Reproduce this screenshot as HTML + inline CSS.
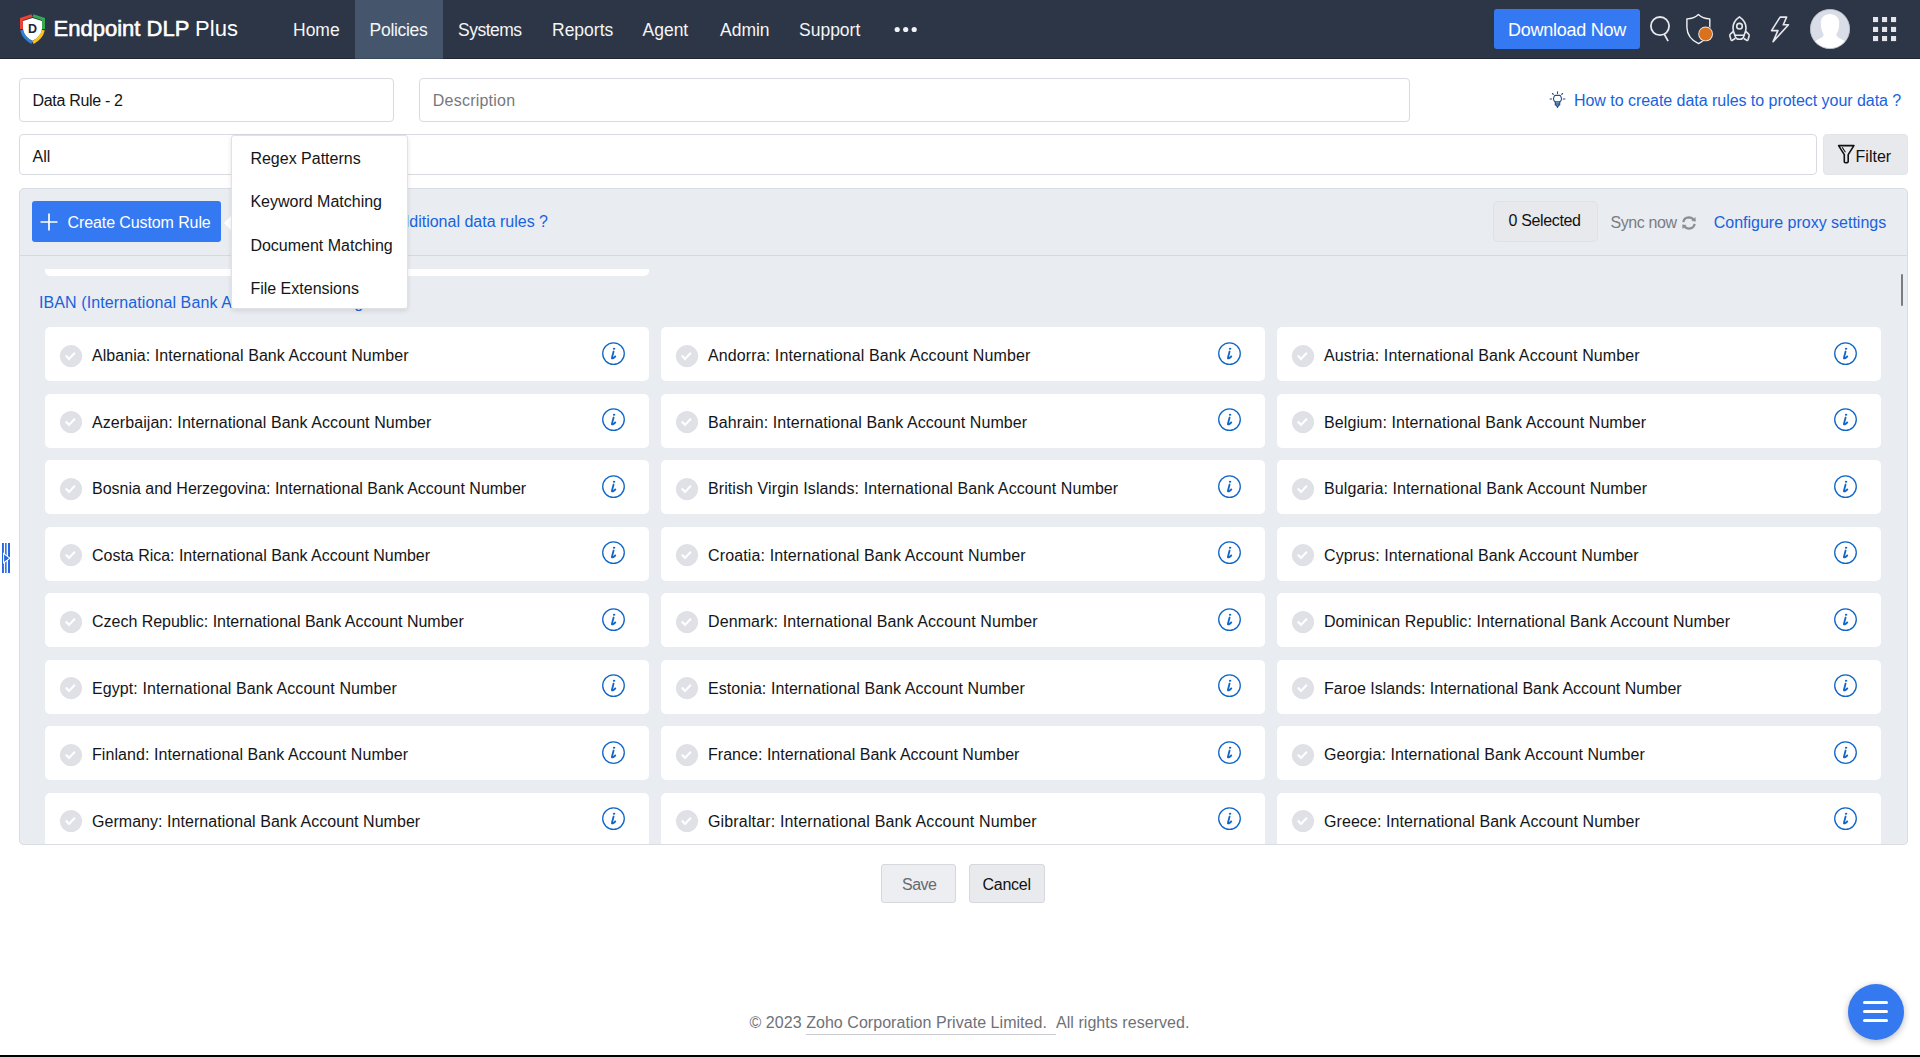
<!DOCTYPE html>
<html><head><meta charset="utf-8"><title>Endpoint DLP Plus</title>
<style>
*{box-sizing:border-box;margin:0;padding:0}
html,body{width:1920px;height:1057px;overflow:hidden;background:#fff}
body{position:relative;font-family:"Liberation Sans",sans-serif;color:#141518;font-size:16px;line-height:16px}
.a{position:absolute;white-space:nowrap}
#hdr{position:absolute;left:0;top:0;width:1920px;height:59px;background:#2d3646;border-bottom:1px solid #1f2734}
#act{position:absolute;left:355px;top:0;width:88px;height:58px;background:#45566c;border-bottom:1px solid #3a485c;height:59px}
.nav{position:absolute;top:21.6px;font-size:17.5px;line-height:17.5px;color:#f4f5f7}
#logo{position:absolute;left:53.6px;top:17.5px;font-size:22px;line-height:22px;color:#fff;letter-spacing:0px}
#logo b{font-weight:normal;-webkit-text-stroke:0.6px #fff}
#dl{position:absolute;left:1494px;top:9px;width:146px;height:40px;background:#3579f2;border-radius:3px;color:#fff;font-size:18px;line-height:18px}
#dl span{position:absolute;left:14px;top:11.5px;letter-spacing:-0.25px}
.inp{position:absolute;background:#fff;border:1px solid #d8dae0;border-radius:4px}
.link{color:#1862de}
#panel{position:absolute;left:19px;top:188px;width:1889px;height:657px;background:#e9ecf1;border:1px solid #d9dce3;border-radius:5px;overflow:hidden}
#tbsep{position:absolute;left:0;top:66px;width:1889px;height:1px;background:#d6d9df}
#ccr{position:absolute;left:32px;top:201px;width:189px;height:41px;background:#3579f2;border-radius:3px;color:#fff}
.card{position:absolute;width:604px;height:54px;background:#fff;border-radius:5px}
.card .ck{position:absolute;left:13.8px;top:16.5px}
.card .ct{position:absolute;left:47px;top:21px;white-space:nowrap;color:#141518}
.card .inf{position:absolute;left:555.6px;top:13.7px}
#menu{position:absolute;left:231px;top:135px;width:177px;height:174px;background:#fff;border:1px solid #e1e2e7;border-radius:3px;box-shadow:0 2px 5px rgba(0,0,0,0.10)}
#menu .mi{position:absolute;left:18.4px;white-space:nowrap;color:#141518}
#arrow{position:absolute;left:224px;top:215px;width:0;height:0;border-top:8px solid transparent;border-bottom:8px solid transparent;border-right:8px solid #fff}
.btn{position:absolute;background:#eceef1;border:1px solid #d6d8dd;border-radius:3px}
#fab{position:absolute;left:1848px;top:984px;width:56px;height:56px;border-radius:50%;background:#3579f0;box-shadow:0 2px 7px rgba(0,0,0,0.28)}
#fab i{position:absolute;left:15px;width:25px;height:3.2px;background:#fff;border-radius:2px}
#botbar{position:absolute;left:0;top:1055px;width:1920px;height:2px;background:#000}
</style></head><body>

<div id="hdr">
  <div id="act"></div>
  <svg class="a" style="left:19px;top:13px" width="28" height="32" viewBox="0 0 28 32">
    <path d="M13 2.6 L2.5 6 L2.5 16" fill="none" stroke="#ea4335" stroke-width="3"/>
    <path d="M14 2.6 L24.5 6 L24.5 16" fill="none" stroke="#34a853" stroke-width="3"/>
    <path d="M2.7 17.2 Q4.5 25 13 29.6" fill="none" stroke="#2f80d8" stroke-width="3"/>
    <path d="M24.3 17.2 Q22.5 25 14 29.6" fill="none" stroke="#fbc416" stroke-width="3"/>
    <path d="M13.5 5 L4 8 L4 16 Q5.5 23.8 13.5 27.8 Q21.5 23.8 23 16 L23 8 Z" fill="#fff"/>
    <text x="13.6" y="19.9" text-anchor="middle" font-family="Liberation Sans" font-weight="bold" font-size="12.5" fill="#1f2533">D</text>
  </svg>
  <div id="logo"><b>Endpoint DLP</b> Plus</div>
  <div class="nav" style="left:293px">Home</div>
  <div class="nav" style="left:369.6px;letter-spacing:-0.3px">Policies</div>
  <div class="nav" style="left:458px;letter-spacing:-0.5px">Systems</div>
  <div class="nav" style="left:552px">Reports</div>
  <div class="nav" style="left:642.5px">Agent</div>
  <div class="nav" style="left:720px">Admin</div>
  <div class="nav" style="left:799px">Support</div>
  <svg class="a" style="left:894px;top:26px" width="24" height="7" viewBox="0 0 24 7">
    <circle cx="3.2" cy="3.5" r="2.6" fill="#f1f2f5"/><circle cx="11.7" cy="3.5" r="2.6" fill="#f1f2f5"/><circle cx="20.2" cy="3.5" r="2.6" fill="#f1f2f5"/>
  </svg>
  <div id="dl"><span>Download Now</span></div>
  <!-- search -->
  <svg class="a" style="left:1648px;top:14px" width="24" height="30" viewBox="0 0 24 30">
    <circle cx="12" cy="12.1" r="9.1" fill="none" stroke="#e6e7eb" stroke-width="1.8"/>
    <path d="M16.4 20.4 L20.1 27.1" stroke="#e6e7eb" stroke-width="1.8"/>
  </svg>
  <!-- shield -->
  <svg class="a" style="left:1684px;top:12px" width="32" height="34" viewBox="0 0 32 34">
    <path d="M14.4 2.4 Q10.5 6.4 2.9 6.9 L2.9 15.5 Q3.3 26.5 14.6 31.6 Q25.6 26.5 25.8 15.5 L25.8 6.9 Q18.3 6.4 14.4 2.4 Z" fill="none" stroke="#f2f3f5" stroke-width="1.4" stroke-linejoin="round"/>
    <circle cx="21.6" cy="21.9" r="8" fill="#2d3646"/>
    <circle cx="21.6" cy="21.9" r="7.4" fill="#f3e6dc"/>
    <circle cx="21.6" cy="21.9" r="6.5" fill="#d9711f"/>
  </svg>
  <!-- rocket -->
  <svg class="a" style="left:1726px;top:13px" width="27" height="32" viewBox="0 0 27 32">
    <g fill="none" stroke="#e6e7eb" stroke-width="1.6" stroke-linejoin="round" stroke-linecap="round">
    <path d="M13.45 3.85 C9.2 6.8 7 11 7 15 C7 18 8 20.5 9 22.3 L18 22.3 C19 20.5 20 18 20 15 C20 11 17.7 6.8 13.45 3.85 Z"/>
    <path d="M9 22.3 Q9.5 26.3 13.5 26.3 Q17.5 26.3 18 22.3"/>
    <circle cx="13.5" cy="13.2" r="2.8"/>
    <path d="M7.3 18.4 L4.3 21.2 Q3.6 21.9 3.8 22.8 L5 26.8 Q5.4 27.8 6.3 27.3 L8.8 25.8"/>
    <path d="M19.7 18.4 L22.7 21.2 Q23.4 21.9 23.2 22.8 L22 26.8 Q21.6 27.8 20.7 27.3 L18.2 25.8"/>
    </g>
  </svg>
  <!-- bolt -->
  <svg class="a" style="left:1768px;top:14px" width="24" height="30" viewBox="0 0 24 30">
    <path d="M12.1 3.1 L18.6 3.1 L15.3 10.8 L20.5 10.8 L5.1 27.6 L9.9 16.6 L3.5 16.6 Z" fill="none" stroke="#e6e7eb" stroke-width="1.6" stroke-linejoin="round"/>
  </svg>
  <!-- avatar -->
  <svg class="a" style="left:1810px;top:9px" width="40" height="40" viewBox="0 0 40 40">
    <defs><clipPath id="avc"><circle cx="20" cy="20" r="19.6"/></clipPath></defs>
    <circle cx="20" cy="20" r="19.8" fill="#d9dde7"/>
    <g clip-path="url(#avc)" fill="#fff">
      <path d="M20 4.9 C25.5 4.9 29.2 8.5 29.2 14 C29.2 19 28 22.5 26.5 25 L26.5 26.5 Q27.5 28.5 31 30 Q37 32.5 40 38 L40 41 L0 41 L0 38 Q3 32.5 9 30 Q12.5 28.5 13.5 26.5 L13.5 25 C12 22.5 10.8 19 10.8 14 C10.8 8.5 14.5 4.9 20 4.9 Z"/>
    </g>
    <circle cx="20" cy="20" r="19.6" fill="none" stroke="#b9bcc4" stroke-width="0.8"/>
  </svg>
  <!-- grid -->
  <svg class="a" style="left:1872px;top:16px" width="26" height="26" viewBox="0 0 26 26" fill="#e6e6ea">
    <rect x="1" y="1" width="5.1" height="5.1"/><rect x="10" y="1" width="5.1" height="5.1"/><rect x="19" y="1" width="5.1" height="5.1"/>
    <rect x="1" y="10.9" width="5.1" height="5.1"/><rect x="10" y="10.9" width="5.1" height="5.1"/><rect x="19" y="10.9" width="5.1" height="5.1"/>
    <rect x="1" y="20" width="5.1" height="5.1"/><rect x="10" y="20" width="5.1" height="5.1"/><rect x="19" y="20" width="5.1" height="5.1"/>
  </svg>
</div>

<!-- row 1 -->
<div class="inp" style="left:19px;top:78px;width:375px;height:44px"></div>
<div class="a" style="left:32.5px;top:93px;letter-spacing:-0.32px">Data Rule - 2</div>
<div class="inp" style="left:419px;top:78px;width:991px;height:44px"></div>
<div class="a" style="left:432.8px;top:93px;color:#76787d;letter-spacing:0.22px">Description</div>
<svg class="a" style="left:1548px;top:89px" width="19" height="21" viewBox="0 0 19 21">
  <g stroke="#1f4f8c" stroke-width="1.1" fill="none" stroke-linecap="round" stroke-linejoin="round">
    <path d="M9.5 2.7 L9.5 4.4"/><path d="M4.4 4.5 L5.3 5.4"/><path d="M14.6 4.5 L13.7 5.4"/>
    <path d="M2.1 10.05 L3.7 10.05"/><path d="M15.3 10.05 L16.9 10.05"/>
    <path d="M7.3 6.4 L11.7 6.4 Q12.5 6.6 12.9 7.6 L13.5 9.6 Q13.6 10.5 13.1 11.3 L11.9 12.9 L7.1 12.9 L5.9 11.3 Q5.4 10.5 5.5 9.6 L6.1 7.6 Q6.5 6.6 7.3 6.4 Z"/>
    <path d="M7.3 12.9 L7.3 15.9 L11.7 15.9 L11.7 12.9"/><path d="M7.4 14.3 L11.6 14.3"/>
    <path d="M8.3 16 L9.5 18.4 L10.7 16"/>
  </g>
</svg>
<div class="a link" style="left:1574px;top:93px;letter-spacing:-0.04px">How to create data rules to protect your data ?</div>

<!-- row 2 -->
<div class="inp" style="left:19px;top:134px;width:1798px;height:41px"></div>
<div class="a" style="left:32.5px;top:148.5px">All</div>
<div class="btn" style="left:1823px;top:134px;width:85px;height:41px;background:#e8e9ec;border-color:#e3e4e8;border-radius:4px"></div>
<svg class="a" style="left:1836px;top:143px" width="20" height="22" viewBox="0 0 20 22">
  <path d="M2.6 2.6 L17.9 2.6 L12.2 11.6 L12.2 18.5 Q12.2 19.5 11.2 19.6 L9.5 19.8 Q8.3 19.8 8.3 18.8 L8.3 11.6 Z" fill="none" stroke="#111" stroke-width="1.6" stroke-linejoin="round"/>
  <path d="M6.2 4.3 L9.4 9.3" stroke="#111" stroke-width="1.1"/>
</svg>
<div class="a" style="left:1855.6px;top:149px;color:#111">Filter</div>

<!-- panel -->
<div id="panel">
  <div id="tbsep"></div>
</div>
<div id="ccr">
  <svg class="a" style="left:8px;top:12px" width="18" height="18" viewBox="0 0 18 18"><path d="M9 0.5 L9 17.5 M0.5 9 L17.5 9" stroke="#fff" stroke-width="1.7"/></svg>
  <span class="a" style="left:35.5px;top:14px;letter-spacing:-0.1px">Create Custom Rule</span>
</div>
<div class="a link" style="left:378px;top:214.2px;width:170px;text-align:right">additional data rules ?</div>

<div class="a" style="left:1492.5px;top:201px;width:105px;height:41px;background:#e8e9ec;border:1px solid #e0e1e5;border-radius:5px"></div>
<div class="a" style="left:1508.5px;top:212.5px;color:#111;letter-spacing:-0.35px">0 Selected</div>
<div class="a" style="left:1610.5px;top:215px;color:#7a7c82;letter-spacing:-0.4px">Sync now</div>
<svg class="a" style="left:1679.8px;top:213.6px" width="18" height="18" viewBox="0 0 17 17">
  <g fill="none" stroke="#8d8f95" stroke-width="2.2">
    <path d="M3.2 7.6 Q3.8 3.4 8.4 3.2 Q11.3 3.2 13 5.6"/>
    <path d="M13.8 9.4 Q13.2 13.6 8.6 13.8 Q5.7 13.8 4 11.4"/>
  </g>
  <path d="M10.8 6.6 L14.9 7.2 L14.6 2.9 Z" fill="#8d8f95"/>
  <path d="M6.2 10.4 L2.1 9.8 L2.4 14.1 Z" fill="#8d8f95"/>
</svg>
<div class="a link" style="left:1713.7px;top:215px">Configure proxy settings</div>

<!-- previous row bottom strip -->
<div class="a" style="left:45px;top:269px;width:604px;height:7px;background:#fff;border-radius:0 0 5px 5px"></div>
<div class="a link" style="left:39px;top:295px;letter-spacing:0.1px">IBAN (International Bank Account Numbering</div>
<div class="a" style="left:1900.5px;top:274px;width:2.2px;height:32px;background:#7b7d82;border-radius:1px"></div>

<div class="card" style="left:45px;top:327.00px"><svg class="ck" width="24" height="24" viewBox="0 0 24 24"><circle cx="12" cy="12.1" r="10.7" fill="#e0e1e6" stroke="#d8d9de" stroke-width="0.6"/><path d="M6.8 11.6 L10 14.9 L15.9 8.7" fill="none" stroke="#fff" stroke-width="2.1" stroke-linecap="butt" stroke-linejoin="miter"/></svg><span class="ct" style="letter-spacing:0.061px">Albania: International Bank Account Number</span><svg class="inf" width="25" height="25" viewBox="0 0 25 25"><circle cx="12.5" cy="12.6" r="10.8" fill="none" stroke="#0f66c8" stroke-width="1.3"/><ellipse cx="13.1" cy="7.8" rx="1.2" ry="1.0" fill="#0f66c8"/><path d="M12.6 10.5 L11.0 16.4 Q10.6 17.8 11.8 17.3 Q13.4 16.6 14.3 15.4" fill="none" stroke="#0f66c8" stroke-width="1.8" stroke-linecap="round" stroke-linejoin="round"/></svg></div>
<div class="card" style="left:661px;top:327.00px"><svg class="ck" width="24" height="24" viewBox="0 0 24 24"><circle cx="12" cy="12.1" r="10.7" fill="#e0e1e6" stroke="#d8d9de" stroke-width="0.6"/><path d="M6.8 11.6 L10 14.9 L15.9 8.7" fill="none" stroke="#fff" stroke-width="2.1" stroke-linecap="butt" stroke-linejoin="miter"/></svg><span class="ct" style="letter-spacing:0.117px">Andorra: International Bank Account Number</span><svg class="inf" width="25" height="25" viewBox="0 0 25 25"><circle cx="12.5" cy="12.6" r="10.8" fill="none" stroke="#0f66c8" stroke-width="1.3"/><ellipse cx="13.1" cy="7.8" rx="1.2" ry="1.0" fill="#0f66c8"/><path d="M12.6 10.5 L11.0 16.4 Q10.6 17.8 11.8 17.3 Q13.4 16.6 14.3 15.4" fill="none" stroke="#0f66c8" stroke-width="1.8" stroke-linecap="round" stroke-linejoin="round"/></svg></div>
<div class="card" style="left:1277px;top:327.00px"><svg class="ck" width="24" height="24" viewBox="0 0 24 24"><circle cx="12" cy="12.1" r="10.7" fill="#e0e1e6" stroke="#d8d9de" stroke-width="0.6"/><path d="M6.8 11.6 L10 14.9 L15.9 8.7" fill="none" stroke="#fff" stroke-width="2.1" stroke-linecap="butt" stroke-linejoin="miter"/></svg><span class="ct" style="letter-spacing:0.129px">Austria: International Bank Account Number</span><svg class="inf" width="25" height="25" viewBox="0 0 25 25"><circle cx="12.5" cy="12.6" r="10.8" fill="none" stroke="#0f66c8" stroke-width="1.3"/><ellipse cx="13.1" cy="7.8" rx="1.2" ry="1.0" fill="#0f66c8"/><path d="M12.6 10.5 L11.0 16.4 Q10.6 17.8 11.8 17.3 Q13.4 16.6 14.3 15.4" fill="none" stroke="#0f66c8" stroke-width="1.8" stroke-linecap="round" stroke-linejoin="round"/></svg></div>
<div class="card" style="left:45px;top:393.52px"><svg class="ck" width="24" height="24" viewBox="0 0 24 24"><circle cx="12" cy="12.1" r="10.7" fill="#e0e1e6" stroke="#d8d9de" stroke-width="0.6"/><path d="M6.8 11.6 L10 14.9 L15.9 8.7" fill="none" stroke="#fff" stroke-width="2.1" stroke-linecap="butt" stroke-linejoin="miter"/></svg><span class="ct" style="letter-spacing:0.073px">Azerbaijan: International Bank Account Number</span><svg class="inf" width="25" height="25" viewBox="0 0 25 25"><circle cx="12.5" cy="12.6" r="10.8" fill="none" stroke="#0f66c8" stroke-width="1.3"/><ellipse cx="13.1" cy="7.8" rx="1.2" ry="1.0" fill="#0f66c8"/><path d="M12.6 10.5 L11.0 16.4 Q10.6 17.8 11.8 17.3 Q13.4 16.6 14.3 15.4" fill="none" stroke="#0f66c8" stroke-width="1.8" stroke-linecap="round" stroke-linejoin="round"/></svg></div>
<div class="card" style="left:661px;top:393.52px"><svg class="ck" width="24" height="24" viewBox="0 0 24 24"><circle cx="12" cy="12.1" r="10.7" fill="#e0e1e6" stroke="#d8d9de" stroke-width="0.6"/><path d="M6.8 11.6 L10 14.9 L15.9 8.7" fill="none" stroke="#fff" stroke-width="2.1" stroke-linecap="butt" stroke-linejoin="miter"/></svg><span class="ct" style="letter-spacing:0.083px">Bahrain: International Bank Account Number</span><svg class="inf" width="25" height="25" viewBox="0 0 25 25"><circle cx="12.5" cy="12.6" r="10.8" fill="none" stroke="#0f66c8" stroke-width="1.3"/><ellipse cx="13.1" cy="7.8" rx="1.2" ry="1.0" fill="#0f66c8"/><path d="M12.6 10.5 L11.0 16.4 Q10.6 17.8 11.8 17.3 Q13.4 16.6 14.3 15.4" fill="none" stroke="#0f66c8" stroke-width="1.8" stroke-linecap="round" stroke-linejoin="round"/></svg></div>
<div class="card" style="left:1277px;top:393.52px"><svg class="ck" width="24" height="24" viewBox="0 0 24 24"><circle cx="12" cy="12.1" r="10.7" fill="#e0e1e6" stroke="#d8d9de" stroke-width="0.6"/><path d="M6.8 11.6 L10 14.9 L15.9 8.7" fill="none" stroke="#fff" stroke-width="2.1" stroke-linecap="butt" stroke-linejoin="miter"/></svg><span class="ct" style="letter-spacing:0.09px">Belgium: International Bank Account Number</span><svg class="inf" width="25" height="25" viewBox="0 0 25 25"><circle cx="12.5" cy="12.6" r="10.8" fill="none" stroke="#0f66c8" stroke-width="1.3"/><ellipse cx="13.1" cy="7.8" rx="1.2" ry="1.0" fill="#0f66c8"/><path d="M12.6 10.5 L11.0 16.4 Q10.6 17.8 11.8 17.3 Q13.4 16.6 14.3 15.4" fill="none" stroke="#0f66c8" stroke-width="1.8" stroke-linecap="round" stroke-linejoin="round"/></svg></div>
<div class="card" style="left:45px;top:460.04px"><svg class="ck" width="24" height="24" viewBox="0 0 24 24"><circle cx="12" cy="12.1" r="10.7" fill="#e0e1e6" stroke="#d8d9de" stroke-width="0.6"/><path d="M6.8 11.6 L10 14.9 L15.9 8.7" fill="none" stroke="#fff" stroke-width="2.1" stroke-linecap="butt" stroke-linejoin="miter"/></svg><span class="ct" style="letter-spacing:-0.013px">Bosnia and Herzegovina: International Bank Account Number</span><svg class="inf" width="25" height="25" viewBox="0 0 25 25"><circle cx="12.5" cy="12.6" r="10.8" fill="none" stroke="#0f66c8" stroke-width="1.3"/><ellipse cx="13.1" cy="7.8" rx="1.2" ry="1.0" fill="#0f66c8"/><path d="M12.6 10.5 L11.0 16.4 Q10.6 17.8 11.8 17.3 Q13.4 16.6 14.3 15.4" fill="none" stroke="#0f66c8" stroke-width="1.8" stroke-linecap="round" stroke-linejoin="round"/></svg></div>
<div class="card" style="left:661px;top:460.04px"><svg class="ck" width="24" height="24" viewBox="0 0 24 24"><circle cx="12" cy="12.1" r="10.7" fill="#e0e1e6" stroke="#d8d9de" stroke-width="0.6"/><path d="M6.8 11.6 L10 14.9 L15.9 8.7" fill="none" stroke="#fff" stroke-width="2.1" stroke-linecap="butt" stroke-linejoin="miter"/></svg><span class="ct" style="letter-spacing:0.088px">British Virgin Islands: International Bank Account Number</span><svg class="inf" width="25" height="25" viewBox="0 0 25 25"><circle cx="12.5" cy="12.6" r="10.8" fill="none" stroke="#0f66c8" stroke-width="1.3"/><ellipse cx="13.1" cy="7.8" rx="1.2" ry="1.0" fill="#0f66c8"/><path d="M12.6 10.5 L11.0 16.4 Q10.6 17.8 11.8 17.3 Q13.4 16.6 14.3 15.4" fill="none" stroke="#0f66c8" stroke-width="1.8" stroke-linecap="round" stroke-linejoin="round"/></svg></div>
<div class="card" style="left:1277px;top:460.04px"><svg class="ck" width="24" height="24" viewBox="0 0 24 24"><circle cx="12" cy="12.1" r="10.7" fill="#e0e1e6" stroke="#d8d9de" stroke-width="0.6"/><path d="M6.8 11.6 L10 14.9 L15.9 8.7" fill="none" stroke="#fff" stroke-width="2.1" stroke-linecap="butt" stroke-linejoin="miter"/></svg><span class="ct" style="letter-spacing:0.088px">Bulgaria: International Bank Account Number</span><svg class="inf" width="25" height="25" viewBox="0 0 25 25"><circle cx="12.5" cy="12.6" r="10.8" fill="none" stroke="#0f66c8" stroke-width="1.3"/><ellipse cx="13.1" cy="7.8" rx="1.2" ry="1.0" fill="#0f66c8"/><path d="M12.6 10.5 L11.0 16.4 Q10.6 17.8 11.8 17.3 Q13.4 16.6 14.3 15.4" fill="none" stroke="#0f66c8" stroke-width="1.8" stroke-linecap="round" stroke-linejoin="round"/></svg></div>
<div class="card" style="left:45px;top:526.56px"><svg class="ck" width="24" height="24" viewBox="0 0 24 24"><circle cx="12" cy="12.1" r="10.7" fill="#e0e1e6" stroke="#d8d9de" stroke-width="0.6"/><path d="M6.8 11.6 L10 14.9 L15.9 8.7" fill="none" stroke="#fff" stroke-width="2.1" stroke-linecap="butt" stroke-linejoin="miter"/></svg><span class="ct" style="letter-spacing:-0.018px">Costa Rica: International Bank Account Number</span><svg class="inf" width="25" height="25" viewBox="0 0 25 25"><circle cx="12.5" cy="12.6" r="10.8" fill="none" stroke="#0f66c8" stroke-width="1.3"/><ellipse cx="13.1" cy="7.8" rx="1.2" ry="1.0" fill="#0f66c8"/><path d="M12.6 10.5 L11.0 16.4 Q10.6 17.8 11.8 17.3 Q13.4 16.6 14.3 15.4" fill="none" stroke="#0f66c8" stroke-width="1.8" stroke-linecap="round" stroke-linejoin="round"/></svg></div>
<div class="card" style="left:661px;top:526.56px"><svg class="ck" width="24" height="24" viewBox="0 0 24 24"><circle cx="12" cy="12.1" r="10.7" fill="#e0e1e6" stroke="#d8d9de" stroke-width="0.6"/><path d="M6.8 11.6 L10 14.9 L15.9 8.7" fill="none" stroke="#fff" stroke-width="2.1" stroke-linecap="butt" stroke-linejoin="miter"/></svg><span class="ct" style="letter-spacing:0.132px">Croatia: International Bank Account Number</span><svg class="inf" width="25" height="25" viewBox="0 0 25 25"><circle cx="12.5" cy="12.6" r="10.8" fill="none" stroke="#0f66c8" stroke-width="1.3"/><ellipse cx="13.1" cy="7.8" rx="1.2" ry="1.0" fill="#0f66c8"/><path d="M12.6 10.5 L11.0 16.4 Q10.6 17.8 11.8 17.3 Q13.4 16.6 14.3 15.4" fill="none" stroke="#0f66c8" stroke-width="1.8" stroke-linecap="round" stroke-linejoin="round"/></svg></div>
<div class="card" style="left:1277px;top:526.56px"><svg class="ck" width="24" height="24" viewBox="0 0 24 24"><circle cx="12" cy="12.1" r="10.7" fill="#e0e1e6" stroke="#d8d9de" stroke-width="0.6"/><path d="M6.8 11.6 L10 14.9 L15.9 8.7" fill="none" stroke="#fff" stroke-width="2.1" stroke-linecap="butt" stroke-linejoin="miter"/></svg><span class="ct" style="letter-spacing:0.085px">Cyprus: International Bank Account Number</span><svg class="inf" width="25" height="25" viewBox="0 0 25 25"><circle cx="12.5" cy="12.6" r="10.8" fill="none" stroke="#0f66c8" stroke-width="1.3"/><ellipse cx="13.1" cy="7.8" rx="1.2" ry="1.0" fill="#0f66c8"/><path d="M12.6 10.5 L11.0 16.4 Q10.6 17.8 11.8 17.3 Q13.4 16.6 14.3 15.4" fill="none" stroke="#0f66c8" stroke-width="1.8" stroke-linecap="round" stroke-linejoin="round"/></svg></div>
<div class="card" style="left:45px;top:593.08px"><svg class="ck" width="24" height="24" viewBox="0 0 24 24"><circle cx="12" cy="12.1" r="10.7" fill="#e0e1e6" stroke="#d8d9de" stroke-width="0.6"/><path d="M6.8 11.6 L10 14.9 L15.9 8.7" fill="none" stroke="#fff" stroke-width="2.1" stroke-linecap="butt" stroke-linejoin="miter"/></svg><span class="ct" style="letter-spacing:-0.019px">Czech Republic: International Bank Account Number</span><svg class="inf" width="25" height="25" viewBox="0 0 25 25"><circle cx="12.5" cy="12.6" r="10.8" fill="none" stroke="#0f66c8" stroke-width="1.3"/><ellipse cx="13.1" cy="7.8" rx="1.2" ry="1.0" fill="#0f66c8"/><path d="M12.6 10.5 L11.0 16.4 Q10.6 17.8 11.8 17.3 Q13.4 16.6 14.3 15.4" fill="none" stroke="#0f66c8" stroke-width="1.8" stroke-linecap="round" stroke-linejoin="round"/></svg></div>
<div class="card" style="left:661px;top:593.08px"><svg class="ck" width="24" height="24" viewBox="0 0 24 24"><circle cx="12" cy="12.1" r="10.7" fill="#e0e1e6" stroke="#d8d9de" stroke-width="0.6"/><path d="M6.8 11.6 L10 14.9 L15.9 8.7" fill="none" stroke="#fff" stroke-width="2.1" stroke-linecap="butt" stroke-linejoin="miter"/></svg><span class="ct" style="letter-spacing:0.102px">Denmark: International Bank Account Number</span><svg class="inf" width="25" height="25" viewBox="0 0 25 25"><circle cx="12.5" cy="12.6" r="10.8" fill="none" stroke="#0f66c8" stroke-width="1.3"/><ellipse cx="13.1" cy="7.8" rx="1.2" ry="1.0" fill="#0f66c8"/><path d="M12.6 10.5 L11.0 16.4 Q10.6 17.8 11.8 17.3 Q13.4 16.6 14.3 15.4" fill="none" stroke="#0f66c8" stroke-width="1.8" stroke-linecap="round" stroke-linejoin="round"/></svg></div>
<div class="card" style="left:1277px;top:593.08px"><svg class="ck" width="24" height="24" viewBox="0 0 24 24"><circle cx="12" cy="12.1" r="10.7" fill="#e0e1e6" stroke="#d8d9de" stroke-width="0.6"/><path d="M6.8 11.6 L10 14.9 L15.9 8.7" fill="none" stroke="#fff" stroke-width="2.1" stroke-linecap="butt" stroke-linejoin="miter"/></svg><span class="ct" style="letter-spacing:0.063px">Dominican Republic: International Bank Account Number</span><svg class="inf" width="25" height="25" viewBox="0 0 25 25"><circle cx="12.5" cy="12.6" r="10.8" fill="none" stroke="#0f66c8" stroke-width="1.3"/><ellipse cx="13.1" cy="7.8" rx="1.2" ry="1.0" fill="#0f66c8"/><path d="M12.6 10.5 L11.0 16.4 Q10.6 17.8 11.8 17.3 Q13.4 16.6 14.3 15.4" fill="none" stroke="#0f66c8" stroke-width="1.8" stroke-linecap="round" stroke-linejoin="round"/></svg></div>
<div class="card" style="left:45px;top:659.60px"><svg class="ck" width="24" height="24" viewBox="0 0 24 24"><circle cx="12" cy="12.1" r="10.7" fill="#e0e1e6" stroke="#d8d9de" stroke-width="0.6"/><path d="M6.8 11.6 L10 14.9 L15.9 8.7" fill="none" stroke="#fff" stroke-width="2.1" stroke-linecap="butt" stroke-linejoin="miter"/></svg><span class="ct" style="letter-spacing:0.082px">Egypt: International Bank Account Number</span><svg class="inf" width="25" height="25" viewBox="0 0 25 25"><circle cx="12.5" cy="12.6" r="10.8" fill="none" stroke="#0f66c8" stroke-width="1.3"/><ellipse cx="13.1" cy="7.8" rx="1.2" ry="1.0" fill="#0f66c8"/><path d="M12.6 10.5 L11.0 16.4 Q10.6 17.8 11.8 17.3 Q13.4 16.6 14.3 15.4" fill="none" stroke="#0f66c8" stroke-width="1.8" stroke-linecap="round" stroke-linejoin="round"/></svg></div>
<div class="card" style="left:661px;top:659.60px"><svg class="ck" width="24" height="24" viewBox="0 0 24 24"><circle cx="12" cy="12.1" r="10.7" fill="#e0e1e6" stroke="#d8d9de" stroke-width="0.6"/><path d="M6.8 11.6 L10 14.9 L15.9 8.7" fill="none" stroke="#fff" stroke-width="2.1" stroke-linecap="butt" stroke-linejoin="miter"/></svg><span class="ct" style="letter-spacing:0.071px">Estonia: International Bank Account Number</span><svg class="inf" width="25" height="25" viewBox="0 0 25 25"><circle cx="12.5" cy="12.6" r="10.8" fill="none" stroke="#0f66c8" stroke-width="1.3"/><ellipse cx="13.1" cy="7.8" rx="1.2" ry="1.0" fill="#0f66c8"/><path d="M12.6 10.5 L11.0 16.4 Q10.6 17.8 11.8 17.3 Q13.4 16.6 14.3 15.4" fill="none" stroke="#0f66c8" stroke-width="1.8" stroke-linecap="round" stroke-linejoin="round"/></svg></div>
<div class="card" style="left:1277px;top:659.60px"><svg class="ck" width="24" height="24" viewBox="0 0 24 24"><circle cx="12" cy="12.1" r="10.7" fill="#e0e1e6" stroke="#d8d9de" stroke-width="0.6"/><path d="M6.8 11.6 L10 14.9 L15.9 8.7" fill="none" stroke="#fff" stroke-width="2.1" stroke-linecap="butt" stroke-linejoin="miter"/></svg><span class="ct" style="letter-spacing:0.002px">Faroe Islands: International Bank Account Number</span><svg class="inf" width="25" height="25" viewBox="0 0 25 25"><circle cx="12.5" cy="12.6" r="10.8" fill="none" stroke="#0f66c8" stroke-width="1.3"/><ellipse cx="13.1" cy="7.8" rx="1.2" ry="1.0" fill="#0f66c8"/><path d="M12.6 10.5 L11.0 16.4 Q10.6 17.8 11.8 17.3 Q13.4 16.6 14.3 15.4" fill="none" stroke="#0f66c8" stroke-width="1.8" stroke-linecap="round" stroke-linejoin="round"/></svg></div>
<div class="card" style="left:45px;top:726.12px"><svg class="ck" width="24" height="24" viewBox="0 0 24 24"><circle cx="12" cy="12.1" r="10.7" fill="#e0e1e6" stroke="#d8d9de" stroke-width="0.6"/><path d="M6.8 11.6 L10 14.9 L15.9 8.7" fill="none" stroke="#fff" stroke-width="2.1" stroke-linecap="butt" stroke-linejoin="miter"/></svg><span class="ct" style="letter-spacing:0.073px">Finland: International Bank Account Number</span><svg class="inf" width="25" height="25" viewBox="0 0 25 25"><circle cx="12.5" cy="12.6" r="10.8" fill="none" stroke="#0f66c8" stroke-width="1.3"/><ellipse cx="13.1" cy="7.8" rx="1.2" ry="1.0" fill="#0f66c8"/><path d="M12.6 10.5 L11.0 16.4 Q10.6 17.8 11.8 17.3 Q13.4 16.6 14.3 15.4" fill="none" stroke="#0f66c8" stroke-width="1.8" stroke-linecap="round" stroke-linejoin="round"/></svg></div>
<div class="card" style="left:661px;top:726.12px"><svg class="ck" width="24" height="24" viewBox="0 0 24 24"><circle cx="12" cy="12.1" r="10.7" fill="#e0e1e6" stroke="#d8d9de" stroke-width="0.6"/><path d="M6.8 11.6 L10 14.9 L15.9 8.7" fill="none" stroke="#fff" stroke-width="2.1" stroke-linecap="butt" stroke-linejoin="miter"/></svg><span class="ct" style="letter-spacing:0.025px">France: International Bank Account Number</span><svg class="inf" width="25" height="25" viewBox="0 0 25 25"><circle cx="12.5" cy="12.6" r="10.8" fill="none" stroke="#0f66c8" stroke-width="1.3"/><ellipse cx="13.1" cy="7.8" rx="1.2" ry="1.0" fill="#0f66c8"/><path d="M12.6 10.5 L11.0 16.4 Q10.6 17.8 11.8 17.3 Q13.4 16.6 14.3 15.4" fill="none" stroke="#0f66c8" stroke-width="1.8" stroke-linecap="round" stroke-linejoin="round"/></svg></div>
<div class="card" style="left:1277px;top:726.12px"><svg class="ck" width="24" height="24" viewBox="0 0 24 24"><circle cx="12" cy="12.1" r="10.7" fill="#e0e1e6" stroke="#d8d9de" stroke-width="0.6"/><path d="M6.8 11.6 L10 14.9 L15.9 8.7" fill="none" stroke="#fff" stroke-width="2.1" stroke-linecap="butt" stroke-linejoin="miter"/></svg><span class="ct" style="letter-spacing:0.08px">Georgia: International Bank Account Number</span><svg class="inf" width="25" height="25" viewBox="0 0 25 25"><circle cx="12.5" cy="12.6" r="10.8" fill="none" stroke="#0f66c8" stroke-width="1.3"/><ellipse cx="13.1" cy="7.8" rx="1.2" ry="1.0" fill="#0f66c8"/><path d="M12.6 10.5 L11.0 16.4 Q10.6 17.8 11.8 17.3 Q13.4 16.6 14.3 15.4" fill="none" stroke="#0f66c8" stroke-width="1.8" stroke-linecap="round" stroke-linejoin="round"/></svg></div>
<div class="card" style="left:45px;top:792.64px"><svg class="ck" width="24" height="24" viewBox="0 0 24 24"><circle cx="12" cy="12.1" r="10.7" fill="#e0e1e6" stroke="#d8d9de" stroke-width="0.6"/><path d="M6.8 11.6 L10 14.9 L15.9 8.7" fill="none" stroke="#fff" stroke-width="2.1" stroke-linecap="butt" stroke-linejoin="miter"/></svg><span class="ct" style="letter-spacing:0.044px">Germany: International Bank Account Number</span><svg class="inf" width="25" height="25" viewBox="0 0 25 25"><circle cx="12.5" cy="12.6" r="10.8" fill="none" stroke="#0f66c8" stroke-width="1.3"/><ellipse cx="13.1" cy="7.8" rx="1.2" ry="1.0" fill="#0f66c8"/><path d="M12.6 10.5 L11.0 16.4 Q10.6 17.8 11.8 17.3 Q13.4 16.6 14.3 15.4" fill="none" stroke="#0f66c8" stroke-width="1.8" stroke-linecap="round" stroke-linejoin="round"/></svg></div>
<div class="card" style="left:661px;top:792.64px"><svg class="ck" width="24" height="24" viewBox="0 0 24 24"><circle cx="12" cy="12.1" r="10.7" fill="#e0e1e6" stroke="#d8d9de" stroke-width="0.6"/><path d="M6.8 11.6 L10 14.9 L15.9 8.7" fill="none" stroke="#fff" stroke-width="2.1" stroke-linecap="butt" stroke-linejoin="miter"/></svg><span class="ct" style="letter-spacing:0.156px">Gibraltar: International Bank Account Number</span><svg class="inf" width="25" height="25" viewBox="0 0 25 25"><circle cx="12.5" cy="12.6" r="10.8" fill="none" stroke="#0f66c8" stroke-width="1.3"/><ellipse cx="13.1" cy="7.8" rx="1.2" ry="1.0" fill="#0f66c8"/><path d="M12.6 10.5 L11.0 16.4 Q10.6 17.8 11.8 17.3 Q13.4 16.6 14.3 15.4" fill="none" stroke="#0f66c8" stroke-width="1.8" stroke-linecap="round" stroke-linejoin="round"/></svg></div>
<div class="card" style="left:1277px;top:792.64px"><svg class="ck" width="24" height="24" viewBox="0 0 24 24"><circle cx="12" cy="12.1" r="10.7" fill="#e0e1e6" stroke="#d8d9de" stroke-width="0.6"/><path d="M6.8 11.6 L10 14.9 L15.9 8.7" fill="none" stroke="#fff" stroke-width="2.1" stroke-linecap="butt" stroke-linejoin="miter"/></svg><span class="ct" style="letter-spacing:0.07px">Greece: International Bank Account Number</span><svg class="inf" width="25" height="25" viewBox="0 0 25 25"><circle cx="12.5" cy="12.6" r="10.8" fill="none" stroke="#0f66c8" stroke-width="1.3"/><ellipse cx="13.1" cy="7.8" rx="1.2" ry="1.0" fill="#0f66c8"/><path d="M12.6 10.5 L11.0 16.4 Q10.6 17.8 11.8 17.3 Q13.4 16.6 14.3 15.4" fill="none" stroke="#0f66c8" stroke-width="1.8" stroke-linecap="round" stroke-linejoin="round"/></svg></div>

<!-- cover panel overflow below -->
<div class="a" style="left:0;top:845px;width:1920px;height:210px;background:#fff"></div>
<div class="a" style="left:19px;top:839px;width:1889px;height:6px;border:1px solid #d9dce3;border-top:none;border-radius:0 0 5px 5px;background:transparent"></div>
<div class="a" style="left:20px;top:839px;width:25px;height:5px;background:#e9ecf1;border-radius:0 0 0 4px"></div>
<div class="a" style="left:1881px;top:839px;width:26px;height:5px;background:#e9ecf1;border-radius:0 0 4px 0"></div>
<div class="a" style="left:649px;top:839px;width:12px;height:5px;background:#e9ecf1"></div>
<div class="a" style="left:1265px;top:839px;width:12px;height:5px;background:#e9ecf1"></div>

<!-- dropdown menu -->
<div id="arrow"></div>
<div id="menu">
  <div class="mi" style="top:14.5px">Regex Patterns</div>
  <div class="mi" style="top:58.3px">Keyword Matching</div>
  <div class="mi" style="top:101.8px">Document Matching</div>
  <div class="mi" style="top:145.1px">File Extensions</div>
</div>

<!-- left collapse handle -->
<svg class="a" style="left:1px;top:542px" width="11" height="32" viewBox="0 0 11 32">
  <g fill="#2566e0"><rect x="1" y="1" width="1.9" height="30"/><rect x="4.1" y="1" width="1.5" height="30"/><rect x="7" y="1" width="2" height="30"/></g>
  <path d="M2.6 11.4 L8.9 16.2 L2.6 21 Z" fill="#2566e0" stroke="#fff" stroke-width="1.1" stroke-linejoin="miter"/>
</svg>

<!-- buttons -->
<div class="btn" style="left:881px;top:864px;width:75px;height:39px"></div>
<div class="a" style="left:902px;top:877px;color:#666a70;letter-spacing:-0.5px">Save</div>
<div class="btn" style="left:969px;top:864px;width:76px;height:39px;background:#e9eaee"></div>
<div class="a" style="left:982.5px;top:877px;color:#111;letter-spacing:-0.25px">Cancel</div>

<!-- footer -->
<div class="a" style="left:749.5px;top:1014.5px;color:#6f7178;letter-spacing:0.05px">© 2023 <span style="border-bottom:1px solid #c9cbd0;padding-bottom:3.5px">Zoho Corporation Private Limited.&nbsp;&nbsp;</span>All rights reserved.</div>

<div id="fab"><i style="top:16.8px"></i><i style="top:25.8px"></i><i style="top:34.8px"></i></div>
<div id="botbar"></div>
</body></html>
